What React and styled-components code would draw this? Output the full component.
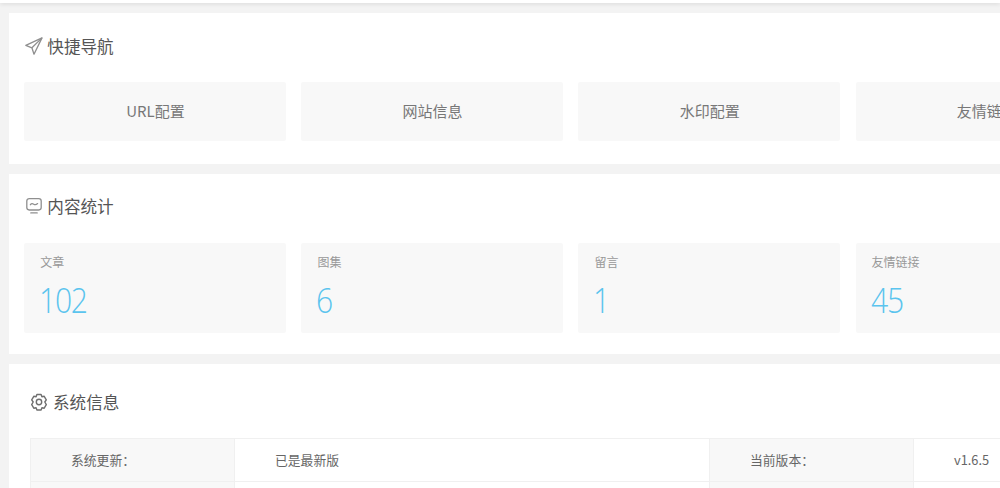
import React from "react";
import styled, { createGlobalStyle } from "styled-components";

const Global = createGlobalStyle`
  html, body {
    margin: 0;
    height: 100%;
    overflow: hidden;
    background: #f3f3f3;
  }
  body {
    font-family: "Noto Sans CJK SC", "Liberation Sans", sans-serif;
    color: #666;
  }
`;

const Page = styled.div`
  width: 1000px;
  height: 488px;
  overflow: hidden;
`;

const TopBar = styled.div`
  height: 3px;
  background: #fff;
  box-shadow: 0 1px 4px rgba(0, 0, 0, 0.12);
`;

const Content = styled.div`
  width: 1122px;
  display: flex;
  flex-direction: column;
  gap: 10px;
  padding: 10px 0 0 9px;
`;

const Panel = styled.section`
  background: #fff;
  padding: ${(p) => p.$padding};
  height: ${(p) => p.$height}px;
  box-sizing: border-box;
`;

const Title = styled.h2`
  display: flex;
  align-items: center;
  gap: ${(p) => p.$gap}px;
  margin: 0;
  height: ${(p) => p.$height}px;
  padding-bottom: ${(p) => p.$lift}px;
  padding-left: ${(p) => p.$indent}px;
  box-sizing: border-box;
  font-size: 16.6px;
  font-weight: 400;
  color: #555;
  svg {
    flex: none;
  }
`;

const CardGrid = styled.div`
  display: grid;
  grid-template-columns: repeat(4, 261.4px);
  column-gap: 15.7px;
`;

const NavCard = styled.a`
  display: flex;
  align-items: center;
  justify-content: center;
  height: 59px;
  padding: 0 0 3px 1px;
  box-sizing: border-box;
  background: #f8f8f8;
  border-radius: 2px;
  font-size: 15px;
  color: #777;
`;

const StatCard = styled.div`
  height: 90px;
  box-sizing: border-box;
  padding: 10px 16px 0;
  background: #f8f8f8;
  border-radius: 2px;
`;

const StatLabel = styled.div`
  font-size: 12px;
  line-height: 17px;
  color: #999;
`;

const StatValue = styled.div`
  margin-top: 7px;
  margin-left: -1px;
  font-family: "Open Sans", sans-serif;
  font-size: 35px;
  font-weight: 300;
  line-height: 46px;
  letter-spacing: -1.5px;
  color: #5bc4ee;
  transform: scaleX(0.86);
  transform-origin: left center;
`;

const InfoTable = styled.table`
  width: 1090px;
  border-collapse: collapse;
  table-layout: fixed;
  font-size: 12.8px;
  color: #666;
  td {
    height: 43px;
    padding: 0 0 2px 40px;
    box-sizing: border-box;
    border: 1px solid #f0f0f0;
  }
`;

const LabelCell = styled.td`
  background: #f8f8f8;
  width: 204px;
`;

const ValueCell = styled.td`
  background: #fff;
  width: ${(p) => p.$width}px;
`;

const SendIcon = () => (
  <svg width="18" height="18" viewBox="0 0 18 18" fill="none" stroke="#8f8f8f" strokeWidth="1.3" strokeLinejoin="round">
    <path d="M17 .9 .8 8.300l6.100 2.500 2.100 6.400L17 .9Z" />
    <path d="M17 .9 6.900 10.800" />
  </svg>
);

const ScreenIcon = () => (
  <svg width="18" height="18" viewBox="0 0 18 18" fill="none" stroke="#8f8f8f" strokeWidth="1.3" strokeLinecap="round">
    <rect x="1.800" y="1.600" width="14.400" height="11.400" rx="2.400" />
    <path d="M5.400 7.700c1-1.300 2-1.300 3.300-.5s2.300.8 3.900-.6" />
    <path d="M5.800 15.900h6.400" />
  </svg>
);

const GearIcon = () => (
  <svg width="18" height="18" viewBox="0 0 18 18" fill="none" stroke="#6f6f6f" strokeWidth="1.4" strokeLinejoin="round">
    <path d="M6.900 1.500h4.200l.8 2.200 2.300-.4 2.100 3.500L14.800 9l1.500 2.700-2.100 3.500-2.300-.4-.8 2.200H6.900l-.8-2.200-2.300.4-2.100-3.500L3.200 9 1.700 6.800l2.100-3.500 2.300.4.800-2.200Z" />
    <circle cx="9" cy="9" r="2.700" />
  </svg>
);

const navItems = ["URL配置", "网站信息", "水印配置", "友情链接"];
const stats = [
  { label: "文章", value: 102 },
  { label: "图集", value: 6 },
  { label: "留言", value: 1 },
  { label: "友情链接", value: 45 },
];

export default function App() {
  return (
    <Page>
      <Global />
      <TopBar />
      <Content>
        <Panel $padding="0 15.3px" $height={151}>
          <Title $height={69} $lift={3} $gap={4} $indent={1}>
            <SendIcon />
            快捷导航
          </Title>
          <CardGrid>
            {navItems.map((item) => (
              <NavCard key={item}>{item}</NavCard>
            ))}
          </CardGrid>
        </Panel>
        <Panel $padding="0 15.3px" $height={180}>
          <Title $height={69} $lift={5} $gap={4} $indent={1}>
            <ScreenIcon />
            内容统计
          </Title>
          <CardGrid>
            {stats.map((s) => (
              <StatCard key={s.label}>
                <StatLabel>{s.label}</StatLabel>
                <StatValue>{s.value}</StatValue>
              </StatCard>
            ))}
          </CardGrid>
        </Panel>
        <Panel $padding="1px 21px 0" $height={130}>
          <Title $height={73} $lift={0} $gap={5} $indent={0}>
            <GearIcon />
            系统信息
          </Title>
          <InfoTable>
            <tbody>
              <tr>
                <LabelCell>系统更新：</LabelCell>
                <ValueCell $width={475}>已是最新版</ValueCell>
                <LabelCell>当前版本：</LabelCell>
                <ValueCell $width={207}>v1.6.5</ValueCell>
              </tr>
              <tr>
                <LabelCell />
                <ValueCell $width={475} />
                <LabelCell />
                <ValueCell $width={207} />
              </tr>
            </tbody>
          </InfoTable>
        </Panel>
      </Content>
    </Page>
  );
}
